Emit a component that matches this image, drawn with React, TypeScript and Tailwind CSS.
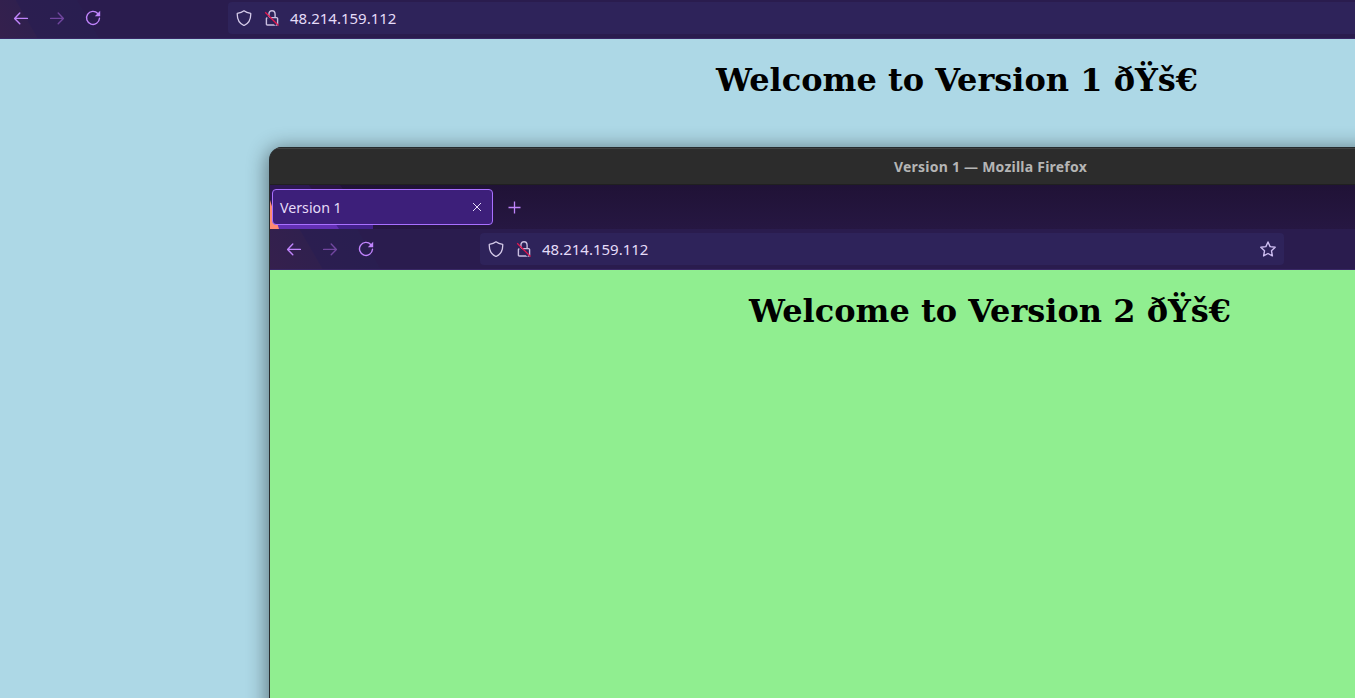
import React from "react";

function BackIcon() {
  return (
    <svg className="h-4 w-4 text-[#c084fc]" viewBox="0 0 16 16" fill="none" stroke="currentColor" strokeWidth="1.4" strokeLinecap="round" strokeLinejoin="round">
      <path d="M14.4 8.4H1.800M6.800 3 1.600 8.400l5.200 5.400" />
    </svg>
  );
}

function ForwardIcon() {
  return (
    <svg className="h-4 w-4 text-[#71469f]" viewBox="0 0 16 16" fill="none" stroke="currentColor" strokeWidth="1.4" strokeLinecap="round" strokeLinejoin="round">
      <path d="M1.600 8.400h12.600M9.200 3l5.200 5.400-5.200 5.400" />
    </svg>
  );
}

function ReloadIcon() {
  return (
    <svg className="h-4 w-4 text-[#c084fc]" viewBox="0 0 16 16" fill="none" stroke="currentColor" strokeWidth="1.4" strokeLinecap="round">
      <path d="M12.800 3.500A6.500 6.500 0 1 0 14.500 8.300" />
      <path d="M15.200.8v5.400H9.800z" fill="currentColor" stroke="none" />
    </svg>
  );
}

function ShieldIcon() {
  return (
    <svg className="h-4 w-4 text-[#d5cbe9]" viewBox="0 0 16 16" fill="none" stroke="currentColor" strokeWidth="1.3" strokeLinejoin="round">
      <path d="M8 .8c1.800 1.400 4 2.100 6.700 2.500.3 5.400-1.700 10-6.700 12.200C3 13.300 1 8.700 1.300 3.300 4 2.900 6.200 2.200 8 .8Z" />
    </svg>
  );
}

function LockIcon() {
  return (
    <svg className="h-4 w-4" viewBox="0 0 16 16" fill="none" strokeWidth="1.4">
      <path d="M4.900 7.600V4.300C4.900 1.800 6.300.7 8 .7s3.100 1.100 3.100 3.600v3.300M3.400 7.600h9.200q1 0 1 1v5.400q0 1-1 1H3.400q-1 0-1-1V8.600q0-1 1-1Z" stroke="#c9bedf" />
      <path d="m0 3.200 12 12" stroke="#2e235a" strokeWidth="1.500" />
      <path d="m1.200 2.200 13.300 13.300" stroke="#e5174f" strokeWidth="1.300" />
    </svg>
  );
}

function StarIcon() {
  return (
    <svg className="h-4 w-4 text-[#cdbdf0]" viewBox="0 0 16 16" fill="none" stroke="currentColor" strokeWidth="1.4" strokeLinejoin="round">
      <path d="m8 1 2.100 4.600 5.100.6-3.700 3.600.9 5.100L8 12.500l-4.400 2.400.9-5.100L.8 6.200l5.100-.6Z" />
    </svg>
  );
}

function NavButtons() {
  return (
    <div className="flex h-8 gap-5 pt-2">
      <BackIcon />
      <ForwardIcon />
      <ReloadIcon />
    </div>
  );
}

function Address() {
  return (
    <div className="flex h-8 items-center pl-2">
      <ShieldIcon />
      <div className="w-3" />
      <LockIcon />
      <span className="ml-[10px] pb-px font-['Noto_Sans',sans-serif] text-[15px] leading-5 text-[#e5dcf8]">48.214.159.112</span>
    </div>
  );
}

function Heading({ version }: { version: number }) {
  return (
    <h1 className="text-center font-['DejaVu_Serif',serif] text-[32px] leading-[38px] font-bold whitespace-nowrap text-black">
      Welcome to Version {version} ðŸš€
    </h1>
  );
}

function FrontWindow() {
  return (
    <section className="absolute top-[147px] left-[269px] flex h-[820px] w-[1442px] flex-col overflow-hidden rounded-t-[13px] border-l border-[#282c2e] bg-[#2c2c2c] shadow-[0_3px_20px_2px_rgba(0,0,0,0.45)]">
      <header className="flex h-[38px] shrink-0 items-center justify-center border-t border-b border-t-[#252b2d] border-b-[#202020] pt-[2px] shadow-[inset_0_1px_0_#414141]">
        <span className="font-['Noto_Sans',sans-serif] text-[14px] leading-5 font-bold tracking-[0.23px] text-[#b5b5b5]">Version 1 — Mozilla Firefox</span>
      </header>

      <div className="relative flex h-11 shrink-0 items-start bg-linear-to-b from-[#201236] to-[#261742] pt-1">
        <svg className="absolute top-0 left-0" width="120" height="44" viewBox="0 0 120 44">
          <path d="M0 0h70l33 44H0Z" fill="#291443" />
          <path d="M0 0h39l30 44H0Z" fill="#2d1753" />
          <path d="M0 38h103v6H0Z" fill="#43218c" />
          <path d="M0 38h65l4 6H0Z" fill="#6330b5" />
          <path d="M0 15 9 44H0Z" fill="#ff8a72" />
        </svg>
        <div className="relative ml-[2px] flex h-9 w-[221px] items-center justify-between rounded-[4px] border border-[#a970ff] bg-[#3d1f7a] pr-[10px] pl-[7px]">
          <span className="pt-px font-['Noto_Sans',sans-serif] text-[14.2px] leading-5 text-[#e6dcf8]">Version 1</span>
          <svg className="h-[10px] w-[10px]" viewBox="0 0 10 10" stroke="#e6dcf8" strokeWidth="1">
            <path d="m1 1 8 8m0-8L1 9" />
          </svg>
        </div>
        <svg className="mt-3 ml-[15px] h-[14px] w-[14px]" viewBox="0 0 14 14" stroke="#c084fc" strokeWidth="1.3">
          <path d="M.5 6.500h12M6.500.5v12" />
        </svg>
      </div>

      <div className="flex h-[41px] shrink-0 items-start border-b border-[#382765] bg-[linear-gradient(60deg,#35204d_0,#30204e_45px,#2b1e50_46px,#291e50_95px,#2a1c4e_96px)] pt-1">
        <div className="w-[210px] shrink-0 pl-4">
          <NavButtons />
        </div>
        <div className="flex h-8 w-[804px] items-center justify-between rounded-[4px] bg-[#2e235a] pr-2">
          <Address />
          <StarIcon />
        </div>
      </div>

      <main className="w-[1440px] flex-1 bg-[#90ee90] pt-[22px]">
        <Heading version={2} />
      </main>
    </section>
  );
}

export default function App() {
  return (
    <div className="relative flex h-[698px] w-full flex-col overflow-hidden bg-[#add8e6]">
      <div className="flex h-[39px] shrink-0 items-start border-b border-[#382765] bg-[linear-gradient(60deg,#35204d_0,#30204e_32px,#2b1e50_33px,#291e50_85px,#2a1c4e_86px)] pt-[2px]">
        <div className="w-[228px] shrink-0 pl-[13px]">
          <NavButtons />
        </div>
        <div className="h-8 flex-1 rounded-l-[4px] bg-[#2e235a]">
          <Address />
        </div>
      </div>
      <main className="w-[1914px] flex-1 pt-[22px]">
        <Heading version={1} />
      </main>
      <FrontWindow />
    </div>
  );
}
